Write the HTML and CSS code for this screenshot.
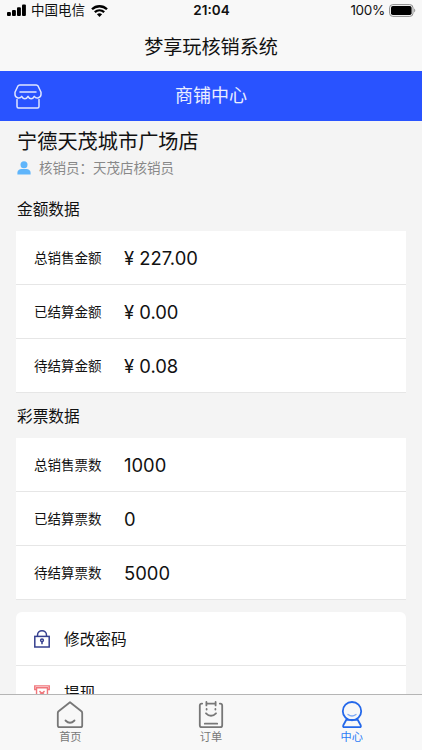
FILE: index.html
```html
<!DOCTYPE html>
<html lang="zh-CN">
<head>
    <meta charset="UTF-8">
    <meta name="viewport" content="width=device-width, initial-scale=1.0">
    <title>梦享玩核销系统</title>
    <link rel="stylesheet" href="styles.css">
</head>
<body>
    <div class="app">
        <div class="status-bar">
            <div class="status-left">
                <svg class="signal" width="19" height="12" viewBox="0 0 19 12">
                    <rect x="0" y="8" width="3.9" height="4" rx="1"/>
                    <rect x="5" y="6" width="3.9" height="6" rx="1"/>
                    <rect x="10" y="3.3" width="3.9" height="8.7" rx="1"/>
                    <rect x="15" y="0.5" width="3.9" height="11.5" rx="1"/>
                </svg>
                <span class="carrier">中国电信</span>
                <svg class="wifi" width="17" height="12" viewBox="0 0 17 12" fill="none" stroke="#000" stroke-width="2.3">
                    <path d="M1 4.3C5.2 0.2 11.8 0.2 16 4.3"/>
                    <path d="M3.8 7.2C6.5 4.7 10.5 4.7 13.2 7.2"/>
                    <path d="M8.5 12L5.9 9.3C7.4 8 9.6 8 11.1 9.3Z" fill="#000" stroke="none"/>
                </svg>
            </div>
            <div class="status-time">21:04</div>
            <div class="status-right">
                <span>100%</span>
                <svg width="27" height="13" viewBox="0 0 27 13">
                    <rect x="0.6" y="0.6" width="23.4" height="11.8" rx="3.2" fill="none" stroke="#8c8c8c"/>
                    <rect x="2" y="2" width="20.6" height="9" rx="1.8"/>
                    <path d="M25.2 4.6C26.6 5.1 26.6 7.9 25.2 8.4Z" fill="#8c8c8c"/>
                </svg>
            </div>
        </div>
        <h1 class="page-title">梦享玩核销系统</h1>

        <div class="shop-bar">
            <svg class="shop-icon" width="28" height="25" viewBox="0 0 28 25" fill="none" stroke="#dfe6ff" stroke-width="1.5" stroke-linejoin="round" stroke-linecap="round">
                <path d="M5.8 1H22.2Q23.5 1 24.2 2.2L27 8.3V10.5C27 13.6 22.5 15.5 20.3 12.3C18.7 15.5 15.6 15.5 14 12.3C12.4 15.5 9.3 15.5 7.7 12.3C5.5 15.5 1 13.6 1 10.5V8.3L3.8 2.2Q4.5 1 5.8 1Z"/>
                <path d="M6 8H22M3 15.5V22.5Q3 24 4.5 24H23.5Q25 24 25 22.5V15.5"/>
            </svg>
            <span>商铺中心</span>
        </div>

        <div class="content">
            <h2 class="shop-name">宁德天茂城市广场店</h2>
            <div class="staff">
                <svg width="14" height="14" viewBox="0 0 14 14" fill="#5fb5fb">
                    <circle cx="7" cy="3.7" r="3.5"/>
                    <path d="M0.4 13.5V11.8C0.4 9.2 2.6 8 4.4 8H9.6C11.4 8 13.6 9.2 13.6 11.8V13.5Z"/>
                </svg>
                <span>核销员：天茂店核销员</span>
            </div>

            <h3 class="section-title">金额数据</h3>
            <div class="card">
                <div class="row"><span class="label">总销售金额</span><span class="value">¥ 227.00</span></div>
                <div class="row"><span class="label">已结算金额</span><span class="value">¥ 0.00</span></div>
                <div class="row"><span class="label">待结算金额</span><span class="value">¥ 0.08</span></div>
            </div>

            <h3 class="section-title">彩票数据</h3>
            <div class="card">
                <div class="row"><span class="label">总销售票数</span><span class="value">1000</span></div>
                <div class="row"><span class="label">已结算票数</span><span class="value">0</span></div>
                <div class="row"><span class="label">待结算票数</span><span class="value">5000</span></div>
            </div>

            <div class="card menu">
                <div class="row">
                    <svg width="16" height="18" viewBox="0 0 16 18" fill="none" stroke="#36408f" stroke-width="1.5">
                        <rect x="0.8" y="6.4" width="14.4" height="10.6"/>
                        <path d="M3.5 6.4V5.2C3.5 -0.6 12.5 -0.6 12.5 5.2V6.4M8 11V14.3"/>
                        <circle cx="8" cy="10.3" r="1.4"/>
                    </svg>
                    <span class="menu-text">修改密码</span>
                </div>
                <div class="row">
                    <svg width="16" height="16" viewBox="0 0 17 17" fill="none" stroke="#f0777c" stroke-width="1.5">
                        <path d="M2.7 4.8H0.8V0.9H16.2V4.8H14.3M2.7 3H14.3V15.5H2.7ZM5.8 6.5L8.5 9L11.2 6.5M8.5 9V13M6.2 9.5H10.8"/>
                    </svg>
                    <span class="menu-text">提现</span>
                </div>
            </div>
        </div>

        <div class="tab-bar">
            <div class="tab">
                <svg width="28" height="28" viewBox="0 0 28 28" fill="none" stroke="#777" stroke-width="1.8" stroke-linejoin="round" stroke-linecap="round">
                    <path d="M14 1.2L25.4 10.2Q26.2 10.9 26.2 12V24.5Q26.2 26.2 24.5 26.2H3.5Q1.8 26.2 1.8 24.5V12Q1.8 10.9 2.6 10.2Z"/>
                    <path d="M9.5 19.5Q14 24 18.5 19.5"/>
                </svg>
                <span>首页</span>
            </div>
            <div class="tab">
                <svg width="28" height="28" viewBox="0 0 28 28" fill="none" stroke="#777" stroke-width="1.8" stroke-linejoin="round" stroke-linecap="round">
                    <path d="M5.2 2.6H4.8Q2.8 2.6 2.8 4.6V24.2Q2.8 26.2 4.8 26.2H23.2Q25.2 26.2 25.2 24.2V4.6Q25.2 2.6 23.2 2.6H22.8M10 2.6H18"/>
                    <path d="M9.4 1V4.4M18.6 1V4.4M9.6 8V8.6M18.4 8V8.6M9 12.3Q14 17.3 19 12.3M7.8 22.7H20.2"/>
                </svg>
                <span>订单</span>
            </div>
            <div class="tab active">
                <svg width="28" height="28" viewBox="0 0 28 28" fill="none" stroke="#2468ea" stroke-width="1.8" stroke-linejoin="round" stroke-linecap="round">
                    <circle cx="14" cy="10.2" r="9.2"/>
                    <path d="M8.6 18.2L5.3 24.2Q4.6 26.2 6.5 26.2H21.5Q23.4 26.2 22.7 24.2L19.4 18.2M8.6 18.8H19.4"/>
                    <path d="M10 13.5Q14 16.5 18 13.5" stroke="#7faaf5" stroke-width="1.3"/>
                </svg>
                <span>中心</span>
            </div>
        </div>
    </div>
</body>
</html>
```
FILE: styles.css
```css
* {
    box-sizing: border-box;
}

body {
    margin: 0;
    font-family: Inter, "Noto Sans CJK SC", sans-serif;
    color: #111;
    background-color: #f4f4f4;
}

.app {
    display: flex;
    flex-direction: column;
    height: 100vh;
    overflow: hidden;
}

svg {
    display: block;
    flex-shrink: 0;
}

h1, h2, h3 {
    margin: 0;
    font-weight: 400;
}

.status-bar {
    display: grid;
    grid-template-columns: 1fr auto 1fr;
    align-items: center;
    height: 21px;
    padding: 0 6px 0 7px;
    font-size: 13.5px;
    line-height: 21px;
    background-color: #f8f8f8;
    flex-shrink: 0;
}

.status-left,
.status-right {
    display: flex;
    align-items: center;
}

.signal {
    margin-bottom: 2px;
}

.carrier {
    margin: 0 6px 0 5px;
}

.status-time {
    font-weight: 600;
    font-size: 13.5px;
}

.status-right {
    justify-content: flex-end;
    gap: 4px;
}

.status-right span {
    letter-spacing: -0.3px;
}

.page-title {
    height: 50px;
    line-height: 53px;
    font-size: 19.1px;
    text-align: center;
    background-color: #f8f8f8;
    flex-shrink: 0;
}

.shop-bar {
    display: grid;
    grid-template-columns: 1fr auto 1fr;
    align-items: center;
    height: 50px;
    padding: 0 14px;
    font-size: 18px;
    line-height: 50px;
    color: #e9eeff;
    background-color: #2953ff;
    flex-shrink: 0;
}

.content {
    flex: 1;
    min-height: 0;
    overflow: hidden;
    padding: 5px 17px 0;
}

.shop-name {
    height: 30px;
    font-size: 20.2px;
    line-height: 32px;
}

.staff {
    display: flex;
    align-items: center;
    gap: 8px;
    height: 24px;
    font-size: 13.5px;
    line-height: 24px;
    color: #888;
}

.section-title {
    height: 45px;
    font-size: 15.7px;
    line-height: 48px;
}

.staff + .section-title {
    height: 51px;
    line-height: 60px;
}

.card {
    margin: 0 -1px;
    background-color: #fff;
}

.row {
    display: flex;
    align-items: center;
    height: 54px;
    padding-left: 18px;
    border-bottom: 1px solid #e6e6e6;
}

.label {
    width: 90px;
    font-size: 13.5px;
    line-height: 20px;
    padding-top: 1px;
}

.value {
    font-size: 18.4px;
}

.menu {
    margin-top: 12px;
    border-radius: 6px 6px 0 0;
}

.menu-text {
    margin-left: 14px;
    font-size: 15.7px;
}

.tab-bar {
    display: flex;
    height: 56px;
    border-top: 1px solid #b5b5b5;
    background-color: #f8f8f8;
    flex-shrink: 0;
}

.tab {
    flex: 1;
    display: flex;
    flex-direction: column;
    align-items: center;
    padding-top: 6px;
    font-size: 11.2px;
    line-height: 17px;
    color: #777;
}

.tab.active {
    color: #2a7bf6;
}
```
